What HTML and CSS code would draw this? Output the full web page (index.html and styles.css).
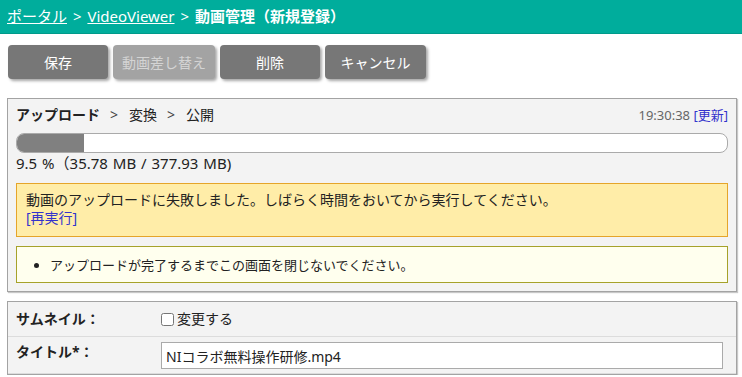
FILE: index.html
```html
<!DOCTYPE html>
<html lang="ja">
<head>
    <meta charset="UTF-8">
    <title>動画管理（新規登録）</title>
    <link rel="stylesheet" href="styles.css">
</head>
<body>
    <div class="header">
        <a href="#">ポータル</a> &gt; <a href="#">VideoViewer</a> &gt; <strong>動画管理（新規登録）</strong>
    </div>

    <div class="toolbar">
        <button class="btn">保存</button>
        <button class="btn btn-wide" disabled>動画差し替え</button>
        <button class="btn">削除</button>
        <button class="btn btn-cancel">キャンセル</button>
    </div>

    <div class="panel upload">
        <div class="status">
            <div class="steps"><b>アップロード</b><span class="sep">&gt;</span>変換<span class="sep">&gt;</span>公開</div>
            <div class="time">19:30:38 <a href="#">[更新]</a></div>
        </div>
        <div class="progress"><div class="progress-bar" style="width: 9.5%"></div></div>
        <div class="progress-text">9.5 %（35.78 MB / 377.93 MB)</div>
        <div class="warning">
            動画のアップロードに失敗しました。しばらく時間をおいてから実行してください。<br>
            <a href="#">[再実行]</a>
        </div>
        <div class="notice">
            <ul>
                <li>アップロードが完了するまでこの画面を閉じないでください。</li>
            </ul>
        </div>
    </div>

    <div class="panel form">
        <div class="form-row">
            <label class="form-label">サムネイル：</label>
            <div class="form-field"><label class="check"><input type="checkbox">変更する</label></div>
        </div>
        <div class="form-row">
            <label class="form-label">タイトル*：</label>
            <div class="form-field"><input type="text" class="text" value="NIコラボ無料操作研修.mp4"></div>
        </div>
    </div>
</body>
</html>
```

FILE: styles.css
```css
body {
    margin: 0;
    font-family: "Noto Sans", "Noto Sans CJK JP", sans-serif;
    font-size: 14px;
    line-height: 20px;
    color: #222;
    background: #fff;
}
a {
    color: #3333cc;
    text-decoration: none;
}
.header {
    height: 33px;
    line-height: 33px;
    padding-left: 7px;
    background: #00ad9c;
    border-bottom: 1px solid #009a8a;
    color: #fff;
    font-size: 15px;
    word-spacing: 2px;
}
.header a {
    color: #fff;
    text-decoration: underline;
}
.toolbar {
    display: flex;
    gap: 5px;
    margin: 11px 0 0 8px;
}
.btn {
    width: 100px;
    height: 34px;
    padding: 0;
    border: none;
    border-radius: 4px;
    background: #777;
    color: #fff;
    font-family: inherit;
    font-size: 14px;
    box-shadow: 2px 2px 3px rgba(0, 0, 0, 0.35);
}
.btn-wide {
    width: 102px;
}
.btn-cancel {
    width: 101px;
}
.btn:disabled {
    background: #a3a3a3;
    color: #d4d4d4;
}
.panel {
    margin: 0 5px 0 7px;
    border: 1px solid #a3a3a3;
    background: #f3f3f3;
    box-shadow: 1px 1px 1px #c8c8c8;
}
.upload {
    margin-top: 19px;
    padding: 6px 8px 8px 8px;
}
.status {
    display: flex;
    justify-content: space-between;
}
.steps b {
    font-weight: 600;
}
.steps .sep {
    margin: 0 11px 0 10px;
    color: #444;
}
.time {
    color: #666;
    font-size: 13px;
}
.progress {
    height: 18px;
    margin-top: 8px;
    background: #fff;
    border: 1px solid #aaa;
    border-radius: 8px;
    overflow: hidden;
}
.progress-bar {
    height: 100%;
    background: #808080;
}
.progress-text {
    font-size: 15px;
    word-spacing: 1px;
}
.warning {
    margin-top: 10px;
    padding: 7px 9px 9px 9px;
    line-height: 18px;
    background: #ffeda8;
    border: 1px solid #e5a52a;
}
.notice {
    margin-top: 9px;
    padding: 8px 0 7px 0;
    font-size: 13px;
    background: #ffffee;
    border: 1px solid #a6a22a;
}
.notice ul {
    margin: 0;
    padding-left: 33px;
}
.form {
    margin-top: 9px;
}
.form-row {
    display: grid;
    grid-template-columns: 145px 1fr;
    align-items: center;
    padding-left: 8px;
    border-bottom: 1px solid #dcdcdc;
}
.form-row:first-child {
    height: 34px;
}
.form-row:last-child {
    height: 37px;
    align-items: start;
    padding-top: 5px;
    box-sizing: border-box;
}
.form-label {
    font-weight: bold;
}
.check {
    display: flex;
    align-items: center;
}
.check input {
    margin: 0 3px 0 0;
    width: 13px;
    height: 13px;
}
.text {
    box-sizing: border-box;
    width: 562px;
    height: 27px;
    padding: 0 4px;
    border: 1px solid #aaa;
    font-family: inherit;
    font-size: 14px;
    color: #222;
}
```
